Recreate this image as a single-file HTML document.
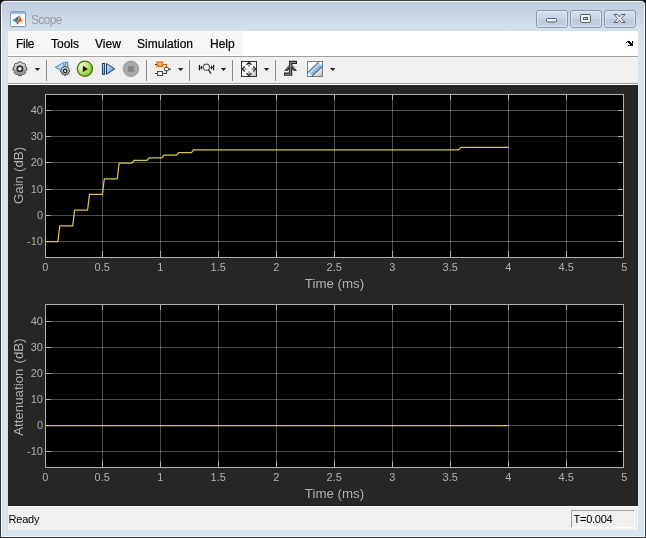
<!DOCTYPE html>
<html><head><meta charset="utf-8"><title>Scope</title>
<style>
html,body{margin:0;padding:0;}
body{width:646px;height:538px;position:relative;overflow:hidden;background:#000;font-family:"Liberation Sans",sans-serif;}
#win{position:absolute;left:0;top:0;width:646px;height:538px;box-sizing:border-box;background:#d7e4f2;border-radius:5px 5px 0 0;}
#frameo{position:absolute;left:0;top:0;width:644px;height:536px;border:1px solid #3c3c3c;border-radius:5px 5px 1px 1px;background:linear-gradient(#bfcddd 0,#c6d4e4 12px,#d5e1ef 31px,#d7e4f2 60px,#d7e4f2 100%);box-shadow:inset 0 0 0 1px #f2f6fb;}
#title{will-change:transform;position:absolute;left:30.500px;top:12px;font-size:12px;color:#9a9a9a;line-height:16px;letter-spacing:-0.65px;}
#menubar{will-change:transform;position:absolute;left:8px;top:31px;width:630px;height:25px;background:#fff;}
#menubar span{position:absolute;top:6px;font-size:12px;line-height:15px;color:#000;-webkit-text-stroke:0.2px #000;}
#tb{position:absolute;left:8px;top:56px;width:630px;height:27px;background:#f0f0f0;border-top:1px solid #a0a0a0;box-sizing:border-box;}
#tbl{position:absolute;left:8px;top:83px;width:630px;height:1px;background:#a0a0a0;}
#tbw{position:absolute;left:8px;top:84px;width:630px;height:1px;background:#fff;}
#plot{position:absolute;left:8px;top:85px;width:630px;height:421px;background:#262626;}
#plotsvg{position:absolute;left:0;top:0;will-change:transform;}
#status{will-change:transform;position:absolute;left:8px;top:506px;width:630px;height:24px;background:#f0f0f0;border-top:1px solid #fff;box-sizing:border-box;font-size:11px;}
#ready{position:absolute;left:0.5px;top:6px;line-height:13px;color:#000;letter-spacing:-0.2px;}
#tbox{position:absolute;left:563px;top:3px;width:62px;height:16px;border:1px solid;border-color:#a0a0a0 #fff #fff #a0a0a0;box-sizing:content-box;}
#tbox span{position:absolute;left:1.5px;top:2px;line-height:13px;letter-spacing:-0.25px;}
.tk{font-size:11px;fill:#afafaf;font-family:"Liberation Sans",sans-serif;}
.lb{font-size:13.3px;fill:#afafaf;font-family:"Liberation Sans",sans-serif;}
.cb{position:absolute;top:10px;height:16px;border:1px solid #8a99ae;border-radius:3px;background:linear-gradient(#d3deec,#c9d5e5 48%,#bccadc 52%,#c4d1e2);box-shadow:inset 0 0 0 1px rgba(255,255,255,.4);}
</style></head><body>
<div id="frameo"></div>
<svg id="appicon" style="position:absolute;left:10px;top:11px" width="17" height="17" viewBox="0 0 17 17">
<defs><linearGradient id="lgB" x1="0" y1="0" x2="1" y2="0"><stop offset="0" stop-color="#4aa0dc"/><stop offset="1" stop-color="#1d5f9f"/></linearGradient>
<linearGradient id="lgR" x1="0" y1="0" x2="1" y2="1"><stop offset="0" stop-color="#e8701c"/><stop offset="0.6" stop-color="#d8431c"/><stop offset="1" stop-color="#a8201c"/></linearGradient></defs>
<rect x="1" y="1" width="16" height="16" rx="1.500" fill="#b9c6d6" opacity=".6"/>
<rect x="0.500" y="0.500" width="15" height="15" rx="1.200" fill="#fcfcfc" stroke="#8a9bb2"/>
<rect x="1" y="1" width="14" height="1.800" fill="#86b4e2"/>
<rect x="1" y="2.800" width="14" height="0.700" fill="#dbe6f2"/>
<path d="M2.100 9.300L7.200 6.300L9 4.600L7.600 9.800L5.800 11.200Z" fill="url(#lgB)"/>
<path d="M9.500 4.200C10.300 5 11 8 11.600 9.300C12.200 10.500 12.700 11.200 12.900 11.600L11.300 10.300C10.800 10 10.200 10.200 9.600 10.900L7.300 13.800L6.200 11.400L7.600 9.600C8.200 8.500 8.800 5.200 9.500 4.200Z" fill="url(#lgR)"/>
<path d="M9.500 4.600C9.900 6 9.800 8.500 9.200 10L7.600 12.600L8.400 9.600C8.900 8 9.100 6 9.500 4.600Z" fill="#f6c21c" opacity=".9"/>
</svg>
<div id="title">Scope</div>
<div class="cb" style="left:536px;width:30px"></div>
<div class="cb" style="left:570px;width:30px"></div>
<div class="cb" style="left:604px;width:30px"></div>
<svg style="position:absolute;left:536px;top:10px" width="100" height="18" viewBox="0 0 100 18">
<rect x="10.500" y="8.500" width="10" height="3.400" rx="0.800" fill="#f1f4f8" stroke="#565d69"/>
<rect x="44.500" y="4.500" width="10" height="8" rx="0.800" fill="#f1f4f8" stroke="#565d69"/>
<rect x="47.500" y="7.500" width="4" height="2" fill="#c3d0e1" stroke="#565d69"/>
<path d="M78 4.500h3.400l2.100 2.400 2.100-2.400h3.400l-3.700 4 3.700 4h-3.400l-2.100-2.400-2.100 2.400h-3.400l3.700-4z" fill="#f1f4f8" stroke="#565d69" stroke-linejoin="round"/>
</svg>
<div id="menubar"><div style="position:absolute;left:0;top:0;width:235px;height:24px;background:#f7f7f7"></div>
<span style="left:8px;letter-spacing:-0.3px">File</span><span style="left:43px">Tools</span><span style="left:87px">View</span><span style="left:129px">Simulation</span><span style="left:202px">Help</span>
<svg style="position:absolute;left:618px;top:10px" width="8" height="6" viewBox="0 0 8 6" shape-rendering="crispEdges"><path d="M0 1h1v-1h3v1h1v1h1v-2h1v5h-5v-1h2v-1h-1v-1h-1v-1h-1v1h-1z" fill="#000"/></svg>
</div>
<div id="tb"></div><div id="tbl"></div><div id="tbw"></div>
<svg id="tbicons" style="position:absolute;left:0;top:0" width="646" height="538" viewBox="0 0 646 538">
<defs>
<linearGradient id="gGear" x1="0" y1="0" x2="0" y2="1"><stop offset="0" stop-color="#e6e6e6"/><stop offset="1" stop-color="#8a8a8a"/></linearGradient>
<radialGradient id="gPlay" cx="0.32" cy="0.3" r="0.8"><stop offset="0" stop-color="#f8fde8"/><stop offset="0.5" stop-color="#bfe472"/><stop offset="1" stop-color="#78b626"/></radialGradient>
<linearGradient id="gBlue" x1="0" y1="0" x2="1" y2="1"><stop offset="0" stop-color="#cfe8f8"/><stop offset="1" stop-color="#4f97cf"/></linearGradient>
<linearGradient id="gBox" x1="0" y1="0" x2="1" y2="1"><stop offset="0" stop-color="#ffffff"/><stop offset="0.6" stop-color="#f6f6f6"/><stop offset="1" stop-color="#b4b4b4"/></linearGradient>
<linearGradient id="gOr" x1="0" y1="0" x2="0" y2="1"><stop offset="0" stop-color="#f8a24a"/><stop offset="1" stop-color="#e2701a"/></linearGradient>
<linearGradient id="gRul" x1="0" y1="0" x2="1" y2="1"><stop offset="0.2" stop-color="#d4ecfa"/><stop offset="0.8" stop-color="#74b4e4"/></linearGradient>
</defs>
<!-- separators -->
<path d="M46.500 60v21M146.500 60v21M189.500 60v21M232.500 60v21M275.500 60v21" stroke="#8c8c8c" stroke-width="1" shape-rendering="crispEdges"/>
<!-- gear -->
<g transform="translate(19.900 68.800)">
<path d="M-1.67 -5.76L-1.37 -6.87L1.37 -6.87L1.67 -5.76L2.89 -5.26L3.89 -5.82L5.82 -3.89L5.26 -2.89L5.76 -1.67L6.87 -1.37L6.87 1.37L5.76 1.67L5.26 2.89L5.82 3.89L3.89 5.82L2.89 5.26L1.67 5.76L1.37 6.87L-1.37 6.87L-1.67 5.76L-2.89 5.26L-3.89 5.82L-5.82 3.89L-5.26 2.89L-5.76 1.67L-6.87 1.37L-6.87 -1.37L-5.76 -1.67L-5.26 -2.89L-5.82 -3.89L-3.89 -5.82L-2.89 -5.26Z" fill="url(#gGear)" stroke="#444" stroke-width="0.900" stroke-linejoin="round"/>
<circle r="2.600" fill="#fff" stroke="#2e2e2e" stroke-width="1.800"/>
</g>
<path transform="translate(34.800 67.900)" d="M0 0h5.400l-2.700 3.200z" fill="#222"/>
<!-- step back -->
<path d="M55.300 67.200L63.900 62.200V72Z" fill="#b4d6f0" stroke="#4a8cc4" stroke-width="1" stroke-linejoin="round"/>
<rect x="65.300" y="62.300" width="2.400" height="8" fill="#b8dcf4" stroke="#3f7fb8" stroke-width="1"/>
<g transform="translate(65.100 70.900) scale(0.640)">
<path d="M-1.67 -5.76L-1.37 -6.87L1.37 -6.87L1.67 -5.76L2.89 -5.26L3.89 -5.82L5.82 -3.89L5.26 -2.89L5.76 -1.67L6.87 -1.37L6.87 1.37L5.76 1.67L5.26 2.89L5.82 3.89L3.89 5.82L2.89 5.26L1.67 5.76L1.37 6.87L-1.37 6.87L-1.67 5.76L-2.89 5.26L-3.89 5.82L-5.82 3.89L-5.26 2.89L-5.76 1.67L-6.87 1.37L-6.87 -1.37L-5.76 -1.67L-5.26 -2.89L-5.82 -3.89L-3.89 -5.82L-2.89 -5.26Z" fill="url(#gGear)" stroke="#3a3a3a" stroke-width="1.400" stroke-linejoin="round"/>
<circle r="2.600" fill="#e8f0f8" stroke="#2e2e2e" stroke-width="2"/>
</g>
<!-- play -->
<circle cx="84.900" cy="68.800" r="7.600" fill="url(#gPlay)" stroke="#3f7412" stroke-width="1.200"/>
<path d="M82.800 65.600V72.200L87.900 68.900Z" fill="#1c1c1c"/>
<!-- step fwd -->
<rect x="102.400" y="63.500" width="2.200" height="10.800" fill="url(#gBlue)" stroke="#1d3f66" stroke-width="1"/>
<path d="M106.500 63.500V74.300L114.600 68.900Z" fill="url(#gBlue)" stroke="#1d3f66" stroke-width="1" stroke-linejoin="round"/>
<!-- stop -->
<circle cx="130.900" cy="68.800" r="7.700" fill="#a9a9a9" stroke="#9a9a9a" stroke-width="1"/>
<rect x="127.900" y="66" width="6.100" height="5.800" fill="#878787"/>
<!-- blocks -->
<rect x="156" y="61" width="7.800" height="6.600" rx="1" fill="#fbd38a" opacity=".8"/>
<rect x="157" y="62" width="5.800" height="4.600" fill="url(#gOr)" stroke="#e0761c" stroke-width="1"/>
<rect x="158.500" y="63" width="3" height="2.400" fill="#f7b877"/>
<path d="M155 64.500h1.800" stroke="#222" stroke-width="1"/>
<path d="M163 64.500h3.500v2.500" stroke="#c8581a" stroke-width="1.200" fill="none"/>
<rect x="157.500" y="71.500" width="5" height="4" fill="#f2f2f2" stroke="#4a4a4a" stroke-width="1"/>
<path d="M155 73.500h2M163 73.500h3.500v-2.500" stroke="#3a3a3a" stroke-width="1" fill="none"/>
<rect x="164.300" y="67.300" width="4.400" height="3.600" rx="1.600" fill="#fff" stroke="#333" stroke-width="1"/>
<path d="M169 69.200h2" stroke="#222" stroke-width="1"/>
<path transform="translate(177.900 67.900)" d="M0 0h5.400l-2.700 3.200z" fill="#222"/>
<!-- zoom -->
<path d="M199.400 65v5.200M213.600 65v5.200" stroke="#111" stroke-width="1.200" fill="none"/>
<path d="M201.400 66v3.200M211.600 66v3.200" stroke="#111" stroke-width="1.300" fill="none"/>
<path d="M199.400 67.600h3.400M210.200 67.600h3.400" stroke="#333" stroke-width="0.800" fill="none"/>
<circle cx="206.400" cy="67.200" r="3.100" fill="#e9f1fb" stroke="#5e5e5e" stroke-width="1.100"/>
<path d="M208.500 69.800l2.200 3.400" stroke="#444" stroke-width="1.500" stroke-linecap="round"/>
<path transform="translate(220.800 67.900)" d="M0 0h5.400l-2.700 3.200z" fill="#222"/>
<!-- fit -->
<rect x="241.500" y="61.500" width="15" height="15" fill="url(#gBox)" stroke="#333" stroke-width="1"/>
<path d="M246.500 64.700L249 62.300L251.500 64.700M246.500 73.300L249 75.700L251.500 73.300M244.700 66.500L242.300 69L244.700 71.500M253.300 66.500L255.700 69L253.300 71.500" stroke="#262626" stroke-width="1.300" fill="none" stroke-linejoin="miter"/>
<path d="M248.200 64.200h1.600v2.500h-1.600zM248.200 71.300h1.600v2.500h-1.600zM244.200 68.200h2.500v1.600h-2.500zM251.300 68.200h2.500v1.600h-2.500z" fill="#8c8c8c"/>
<path transform="translate(263.800 67.900)" d="M0 0h5.400l-2.700 3.200z" fill="#222"/>
<!-- trigger -->
<path d="M284.800 70.500L290.700 63.600L296.400 70.500L293.600 70.500L292.200 69L289.200 69L287.800 70.500Z" fill="#3a3a3a" stroke="#222" stroke-width="0.600" stroke-linejoin="round"/>
<path d="M284 74.200h6.700v-11.800h6.300" stroke="#222" stroke-width="3.200" fill="none"/>
<path d="M286.600 69L290.700 65.200L294.800 69" stroke="#8a8a8a" stroke-width="1" fill="none"/>
<path d="M285 74.200h5.700v-11.800h5.300" stroke="#9c9c9c" stroke-width="1" fill="none"/>
<!-- ruler -->
<rect x="307.500" y="61.500" width="15" height="15" fill="url(#gBox)" stroke="#7e7e7e" stroke-width="1"/>
<path d="M308 72.300L318.700 62L322.300 66.300L312.200 76.200Z" fill="url(#gRul)"/>
<path d="M307.800 72.500L318.800 61.900M312 76.400L322.500 66.200" stroke="#2a3f58" stroke-width="1" fill="none"/>
<path d="M312.800 72.600l1.100 1.100M314.800 70.600l1.100 1.100M316.800 68.600l1.100 1.100M318.800 66.600l1.100 1.100" stroke="#1f4f88" stroke-width="1"/>
<path transform="translate(330 67.900)" d="M0 0h5.400l-2.700 3.200z" fill="#222"/>
</svg>

<div id="plot"></div>
<svg id="plotsvg" width="646" height="538" viewBox="0 0 646 538">
<rect x="45" y="94" width="579" height="164" fill="#000"/>
<path d="M102.5 94V257M160.5 94V257M218.5 94V257M276.5 94V257M334.5 94V257M392.5 94V257M450.5 94V257M508.5 94V257M566.5 94V257" stroke="#afafaf" stroke-opacity="0.45" stroke-width="1" fill="none" shape-rendering="crispEdges"/>
<path d="M45 110.5H623M45 136.5H623M45 162.5H623M45 189.5H623M45 215.5H623M45 241.5H623" stroke="#afafaf" stroke-opacity="0.45" stroke-width="1" fill="none" shape-rendering="crispEdges"/>
<path d="M102.5 257v-6M102.5 94v6M160.5 257v-6M160.5 94v6M218.5 257v-6M218.5 94v6M276.5 257v-6M276.5 94v6M334.5 257v-6M334.5 94v6M392.5 257v-6M392.5 94v6M450.5 257v-6M450.5 94v6M508.5 257v-6M508.5 94v6M566.5 257v-6M566.5 94v6M45 110.5h6M624 110.5h-6M45 136.5h6M624 136.5h-6M45 162.5h6M624 162.5h-6M45 189.5h6M624 189.5h-6M45 215.5h6M624 215.5h-6M45 241.5h6M624 241.5h-6" stroke="#afafaf" stroke-width="1" fill="none" shape-rendering="crispEdges"/>
<rect x="45.5" y="94.5" width="578" height="163" fill="none" stroke="#afafaf" shape-rendering="crispEdges"/>
<polyline points="44.90,241.65 57.89,241.65 59.75,225.93 72.74,225.93 74.60,210.21 87.59,210.21 89.44,194.49 102.44,194.49 104.29,178.77 117.28,178.77 119.14,163.05 132.13,163.05 133.99,160.43 146.98,160.43 148.84,157.81 161.83,157.81 163.68,155.19 176.68,155.19 178.53,152.57 191.52,152.57 193.38,149.95 458.79,149.95 460.64,147.33 508.90,147.33" fill="none" stroke="#dcc44c" stroke-width="1.25" stroke-linejoin="round"/>
<text x="43" y="114" text-anchor="end" class="tk">40</text>
<text x="43" y="140" text-anchor="end" class="tk">30</text>
<text x="43" y="166" text-anchor="end" class="tk">20</text>
<text x="43" y="193" text-anchor="end" class="tk">10</text>
<text x="43" y="219" text-anchor="end" class="tk">0</text>
<text x="43" y="245" text-anchor="end" class="tk">-10</text>
<text x="45.2" y="271" text-anchor="middle" class="tk">0</text>
<text x="102.2" y="271" text-anchor="middle" class="tk">0.5</text>
<text x="160.2" y="271" text-anchor="middle" class="tk">1</text>
<text x="218.2" y="271" text-anchor="middle" class="tk">1.5</text>
<text x="276.2" y="271" text-anchor="middle" class="tk">2</text>
<text x="334.2" y="271" text-anchor="middle" class="tk">2.5</text>
<text x="392.2" y="271" text-anchor="middle" class="tk">3</text>
<text x="450.2" y="271" text-anchor="middle" class="tk">3.5</text>
<text x="508.2" y="271" text-anchor="middle" class="tk">4</text>
<text x="566.2" y="271" text-anchor="middle" class="tk">4.5</text>
<text x="624.2" y="271" text-anchor="middle" class="tk">5</text>
<text x="334.5" y="288" text-anchor="middle" class="lb">Time (ms)</text>
<text transform="translate(23 175.5) rotate(-90)" text-anchor="middle" class="lb" style="word-spacing:0.3px">Gain (dB)</text>
<rect x="45" y="304" width="579" height="164" fill="#000"/>
<path d="M102.5 304V467M160.5 304V467M218.5 304V467M276.5 304V467M334.5 304V467M392.5 304V467M450.5 304V467M508.5 304V467M566.5 304V467" stroke="#afafaf" stroke-opacity="0.45" stroke-width="1" fill="none" shape-rendering="crispEdges"/>
<path d="M45 321.5H623M45 347.5H623M45 373.5H623M45 399.5H623M45 425.5H623M45 451.5H623" stroke="#afafaf" stroke-opacity="0.45" stroke-width="1" fill="none" shape-rendering="crispEdges"/>
<path d="M102.5 467v-6M102.5 304v6M160.5 467v-6M160.5 304v6M218.5 467v-6M218.5 304v6M276.5 467v-6M276.5 304v6M334.5 467v-6M334.5 304v6M392.5 467v-6M392.5 304v6M450.5 467v-6M450.5 304v6M508.5 467v-6M508.5 304v6M566.5 467v-6M566.5 304v6M45 321.5h6M624 321.5h-6M45 347.5h6M624 347.5h-6M45 373.5h6M624 373.5h-6M45 399.5h6M624 399.5h-6M45 425.5h6M624 425.5h-6M45 451.5h6M624 451.5h-6" stroke="#afafaf" stroke-width="1" fill="none" shape-rendering="crispEdges"/>
<rect x="45.5" y="304.5" width="578" height="163" fill="none" stroke="#afafaf" shape-rendering="crispEdges"/>
<polyline points="44.90,425.65 508.90,425.65" fill="none" stroke="#dcc44c" stroke-width="1.25" stroke-linejoin="round"/>
<text x="43" y="325" text-anchor="end" class="tk">40</text>
<text x="43" y="351" text-anchor="end" class="tk">30</text>
<text x="43" y="377" text-anchor="end" class="tk">20</text>
<text x="43" y="403" text-anchor="end" class="tk">10</text>
<text x="43" y="429" text-anchor="end" class="tk">0</text>
<text x="43" y="455" text-anchor="end" class="tk">-10</text>
<text x="45.2" y="481" text-anchor="middle" class="tk">0</text>
<text x="102.2" y="481" text-anchor="middle" class="tk">0.5</text>
<text x="160.2" y="481" text-anchor="middle" class="tk">1</text>
<text x="218.2" y="481" text-anchor="middle" class="tk">1.5</text>
<text x="276.2" y="481" text-anchor="middle" class="tk">2</text>
<text x="334.2" y="481" text-anchor="middle" class="tk">2.5</text>
<text x="392.2" y="481" text-anchor="middle" class="tk">3</text>
<text x="450.2" y="481" text-anchor="middle" class="tk">3.5</text>
<text x="508.2" y="481" text-anchor="middle" class="tk">4</text>
<text x="566.2" y="481" text-anchor="middle" class="tk">4.5</text>
<text x="624.2" y="481" text-anchor="middle" class="tk">5</text>
<text x="334.5" y="498" text-anchor="middle" class="lb">Time (ms)</text>
<text transform="translate(23 387.1) rotate(-90)" text-anchor="middle" class="lb" style="word-spacing:1.4px">Attenuation (dB)</text>
</svg>
<div id="status"><span id="ready">Ready</span><div id="tbox"><span>T=0.004</span></div></div>
</body></html>
